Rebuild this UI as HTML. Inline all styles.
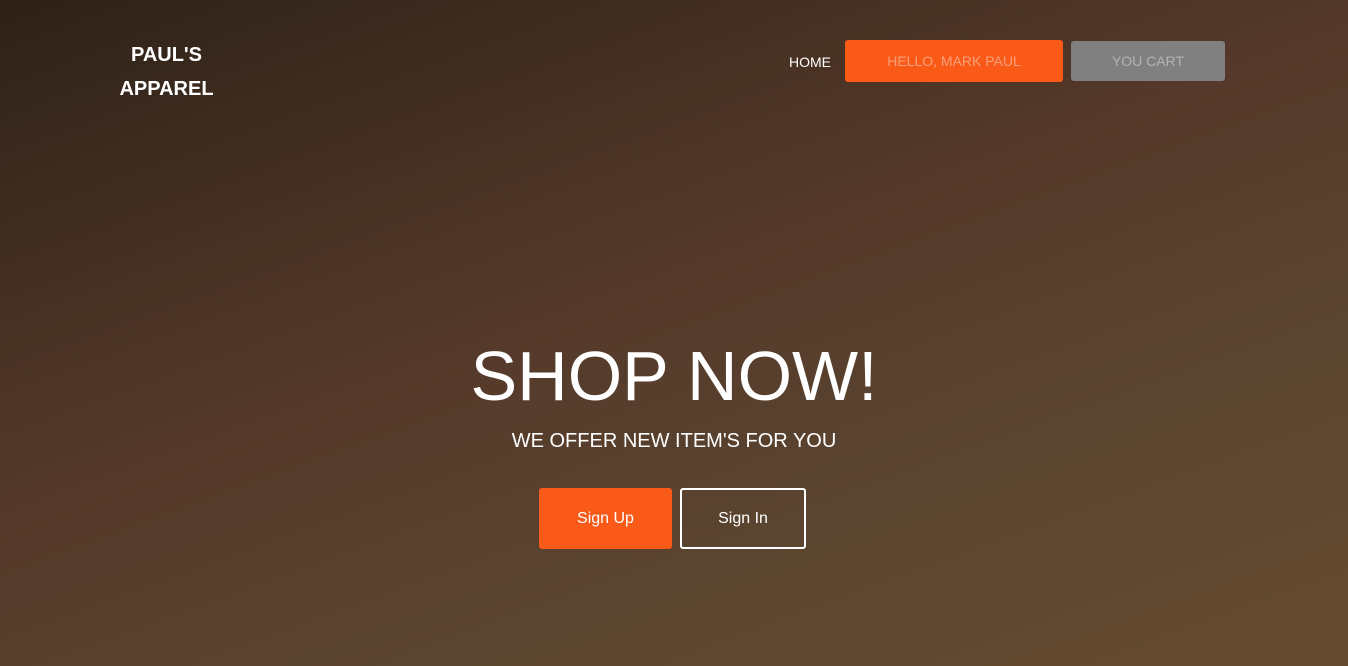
<!DOCTYPE html>
<html><head><meta charset="utf-8"><style>
*{margin:0;padding:0;box-sizing:border-box}
body{width:1348px;height:666px;overflow:hidden;font-family:"Liberation Sans",Arial,sans-serif;
background:linear-gradient(160deg,#2e2118 0%,#3f2d20 20%,#55392a 45%,#5a4530 70%,#664b30 100%);position:relative;color:#fff}
.logo{position:absolute;left:119px;top:38px;font-weight:bold;font-size:20px;line-height:34px;text-align:center;width:95px}
.home{position:absolute;left:789px;top:54px;font-size:14px}
.b1{position:absolute;left:845px;top:40px;width:218px;height:42px;background:#fa5a18;border-radius:3px;color:#f7a07a;font-size:14px;text-align:center;line-height:42px}
.b2{position:absolute;left:1071px;top:41px;width:154px;height:40px;background:#808080;border-radius:3px;color:#b4b4b4;font-size:14px;text-align:center;line-height:40px}
h1{position:absolute;left:0;width:1348px;top:336px;text-align:center;font-weight:normal;font-size:70px;line-height:80px}
.sub{position:absolute;left:0;width:1348px;top:430px;text-align:center;font-size:20px}
.su{position:absolute;left:539px;top:488px;width:133px;height:61px;background:#fa5a18;border-radius:3px;text-align:center;line-height:61px;font-size:16px}
.si{position:absolute;left:680px;top:488px;width:126px;height:61px;border:2px solid #fff;border-radius:3px;text-align:center;line-height:57px;font-size:16px}
</style></head><body>
<div class="logo">PAUL'S<br>APPAREL</div>
<div class="home">HOME</div>
<div class="b1">HELLO, MARK PAUL</div>
<div class="b2">YOU CART</div>
<h1>SHOP NOW!</h1>
<div class="sub">WE OFFER NEW ITEM'S FOR YOU</div>
<div class="su">Sign Up</div>
<div class="si">Sign In</div>
</body></html>
